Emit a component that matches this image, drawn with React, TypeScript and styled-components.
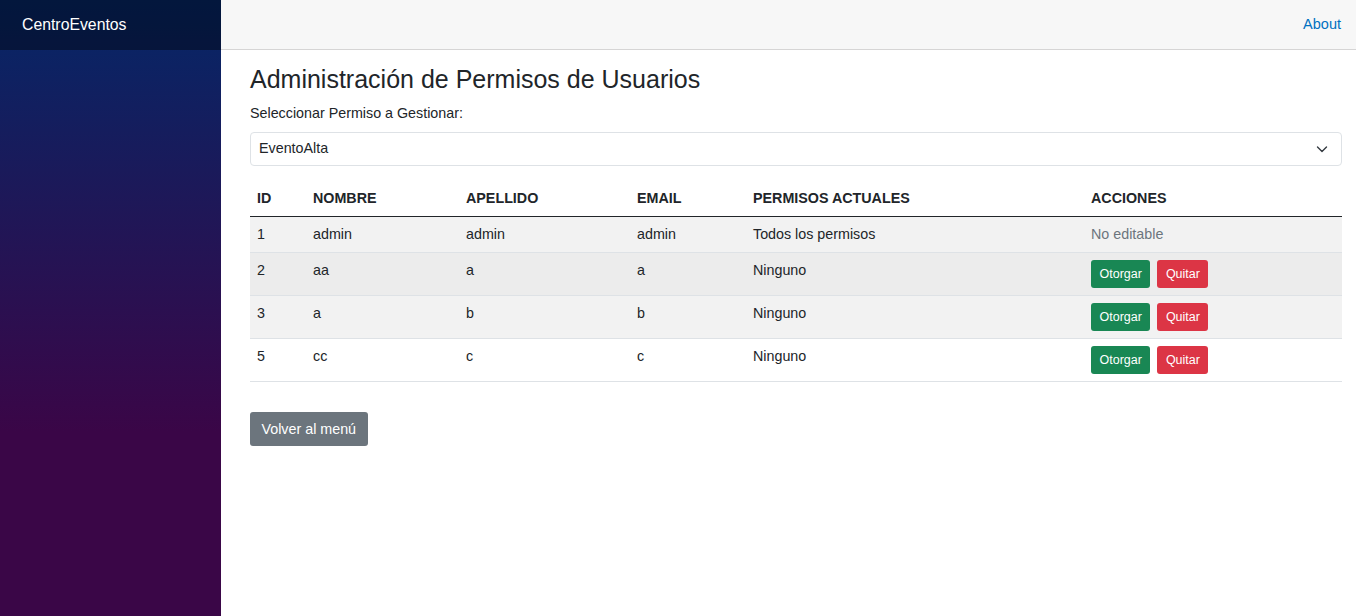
import React from "react";
import styled, { createGlobalStyle } from "styled-components";

const Global = createGlobalStyle`
  html, body { margin: 0; padding: 0; }
  body {
    font-family: "Liberation Sans", Arial, sans-serif;
    font-size: 14.3px;
    line-height: 1.5;
    color: #212529;
    background: #fff;
  }
  * { box-sizing: border-box; }
`;

const Page = styled.div`
  display: flex;
  min-height: 616px;
`;

const Sidebar = styled.aside`
  width: 221px;
  flex-shrink: 0;
  background-image: linear-gradient(180deg, rgb(5, 39, 103) 0%, #3a0647 70%);
  display: flex;
  flex-direction: column;
`;

const Brand = styled.div`
  height: 50px;
  background-color: rgba(0, 0, 0, 0.4);
  display: flex;
  align-items: center;
  padding-left: 22px;
  color: #fff;
  font-size: 15.8px;
`;

const Main = styled.main`
  flex: 1;
  display: flex;
  flex-direction: column;
`;

const TopRow = styled.div`
  height: 50px;
  background: #f7f7f7;
  border-bottom: 1px solid #d6d5d5;
  display: flex;
  align-items: center;
  justify-content: flex-end;
  padding-right: 15px;
`;

const Link = styled.a`
  color: #0071c1;
  text-decoration: none;
  font-size: 14.5px;
`;

const Content = styled.div`
  padding: 14px 14px 20px 29px;
`;

const Title = styled.h3`
  margin: 0 0 9px;
  font-size: 25px;
  font-weight: 500;
  line-height: 1.2;
`;

const Label = styled.label`
  display: block;
  margin-bottom: 8px;
  line-height: 21px;
`;

const SelectBox = styled.div`
  height: 34px;
  border: 1px solid #dee2e6;
  border-radius: 4px;
  display: flex;
  align-items: center;
  justify-content: space-between;
  padding: 0 13px 0 8px;
  margin-bottom: 14px;
`;

const Table = styled.table`
  width: 100%;
  border-collapse: collapse;
`;

const Th = styled.th`
  text-align: left;
  font-weight: 700;
  padding: 7.5px 7px 7px;
  border-bottom: 1px solid #212529;
  text-transform: uppercase;
`;

const Tr = styled.tr<{ $bg: string }>`
  background: ${(p) => p.$bg};
  border-bottom: 1px solid #dee2e6;
`;

const Td = styled.td<{ $muted?: boolean }>`
  padding: 7px;
  vertical-align: top;
  color: ${(p) => (p.$muted ? "#6c757d" : "#212529")};
`;

const Actions = styled.div`
  display: flex;
  gap: 7px;
`;

const SmallBtn = styled.button<{ $variant: "success" | "danger" }>`
  font-family: inherit;
  font-size: 12.5px;
  line-height: 1.5;
  color: #fff;
  border: none;
  border-radius: 3px;
  height: 28px;
  padding: 0 8.5px;
  background: ${(p) => (p.$variant === "success" ? "#198754" : "#dc3545")};
`;

const BackBtn = styled.button`
  margin-top: 30px;
  font-family: inherit;
  font-size: 14.3px;
  color: #fff;
  background: #6c757d;
  border: none;
  border-radius: 3px;
  height: 34px;
  padding: 0 11.5px;
`;

const users = [
  { id: 1, n: "admin", a: "admin", e: "admin", p: "Todos los permisos", editable: false },
  { id: 2, n: "aa", a: "a", e: "a", p: "Ninguno", editable: true },
  { id: 3, n: "a", a: "b", e: "b", p: "Ninguno", editable: true },
  { id: 5, n: "cc", a: "c", e: "c", p: "Ninguno", editable: true },
];
const bgs = ["#f2f2f2", "#ececec", "#f2f2f2", "#ffffff"];

const Chevron = () => (
  <svg width="12" height="8" viewBox="0 0 12 8" fill="none" stroke="#343a40" strokeWidth="1.4" strokeLinecap="round" strokeLinejoin="round">
    <path d="M1.5 2l4.5 4.5 4.5-4.5" />
  </svg>
);

export default function App() {
  return (
    <>
      <Global />
      <Page>
        <Sidebar>
          <Brand>CentroEventos</Brand>
        </Sidebar>
        <Main>
          <TopRow>
            <Link href="#">About</Link>
          </TopRow>
          <Content>
            <Title>Administración de Permisos de Usuarios</Title>
            <Label>Seleccionar Permiso a Gestionar:</Label>
            <SelectBox>
              <span>EventoAlta</span>
              <Chevron />
            </SelectBox>
            <Table>
              <colgroup>
                <col style={{ width: 56 }} />
                <col style={{ width: 153 }} />
                <col style={{ width: 171 }} />
                <col style={{ width: 116 }} />
                <col style={{ width: 338 }} />
                <col />
              </colgroup>
              <thead>
                <tr>
                  <Th>ID</Th>
                  <Th>Nombre</Th>
                  <Th>Apellido</Th>
                  <Th>Email</Th>
                  <Th>Permisos Actuales</Th>
                  <Th>Acciones</Th>
                </tr>
              </thead>
              <tbody>
                {users.map((u, i) => (
                  <Tr key={u.id} $bg={bgs[i]}>
                    <Td>{u.id}</Td>
                    <Td>{u.n}</Td>
                    <Td>{u.a}</Td>
                    <Td>{u.e}</Td>
                    <Td>{u.p}</Td>
                    <Td $muted={!u.editable}>
                      {u.editable ? (
                        <Actions>
                          <SmallBtn $variant="success">Otorgar</SmallBtn>
                          <SmallBtn $variant="danger">Quitar</SmallBtn>
                        </Actions>
                      ) : (
                        "No editable"
                      )}
                    </Td>
                  </Tr>
                ))}
              </tbody>
            </Table>
            <BackBtn>Volver al menú</BackBtn>
          </Content>
        </Main>
      </Page>
    </>
  );
}
